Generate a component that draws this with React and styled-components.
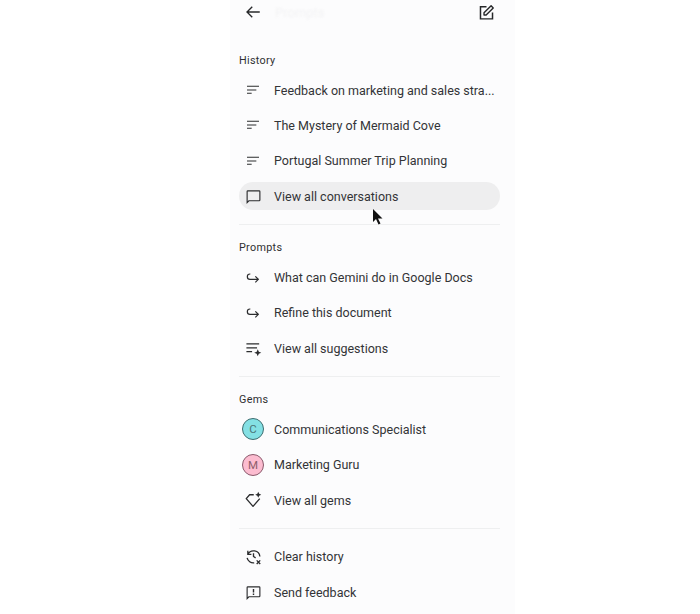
import React from "react";
import styled, { createGlobalStyle } from "styled-components";

const Global = createGlobalStyle`
  html, body { margin: 0; padding: 0; background: #fff; }
  body { font-family: Roboto, "Liberation Sans", sans-serif; color: #2a2b2d; }
`;

const Page = styled.div`
  width: 700px;
  height: 614px;
  overflow: hidden;
  display: flex;
  justify-content: flex-start;
  padding-left: 230px;
  box-sizing: border-box;
`;

const Panel = styled.div`
  position: relative;
  width: 285px;
  height: 614px;
  background: #fcfcfd;
  box-sizing: border-box;
  padding: 0 15px 0 9px;
  display: flex;
  flex-direction: column;
`;

const TopBar = styled.div`
  height: 24px;
  display: flex;
  align-items: center;
  justify-content: space-between;
  padding: 0 5px 0 5px;
  margin-bottom: 27px;
  color: #27282a;
`;

const GhostTitle = styled.span`
  flex: 1;
  margin-left: 13px;
  font-size: 13px;
  color: #f3f3f4;
  filter: blur(1px);
`;

const Heading = styled.div`
  height: 19px;
  line-height: 19px;
  font-size: 10.8px;
  font-weight: 400;
  letter-spacing: 0.3px;
  color: #2f3032;
  margin-bottom: ${(p) => p.$gap}px;
`;

const Row = styled.div`
  height: ${(p) => (p.$active ? 28 : 35.3)}px;
  margin: ${(p) => (p.$active ? "4px 0 3.5px" : "0")};
  display: flex;
  align-items: center;
  border-radius: 14px;
  background: ${(p) => (p.$active ? "#eeeeef" : "transparent")};
  font-size: 12.5px;
  color: #333437;
`;

const IconSlot = styled.span`
  width: 35px;
  flex: none;
  display: flex;
  justify-content: center;
  padding-right: 7px;
  box-sizing: border-box;
  color: #2b2c2e;
`;

const Label = styled.span`
  white-space: nowrap;
`;

const Divider = styled.div`
  height: 1px;
  background: #eeeff0;
  margin: ${(p) => p.$m};
`;

const Avatar = styled.span`
  width: 22px;
  height: 22px;
  flex: none;
  border-radius: 50%;
  box-sizing: border-box;
  border: 1px solid ${(p) => p.$edge};
  background: ${(p) => p.$bg};
  color: ${(p) => p.$fg};
  font-size: 11.5px;
  display: flex;
  align-items: center;
  justify-content: center;
`;

const Cursor = styled.svg`
  position: absolute;
  left: 142px;
  top: 209px;
`;

const Ico = ({ children, size = 16, vb = 24 }) => (
  <svg width={size} height={size} viewBox={`0 0 ${vb} ${vb}`} fill="none" stroke="currentColor" strokeWidth="2">
    {children}
  </svg>
);

const Lines = () => (
  <Ico>
    <path d="M3 6.5h18M3 12h14M3 17h7" strokeWidth="1.6" />
  </Ico>
);
const Chat = () => (
  <Ico size={17}>
    <path d="M3 20.5V5a1 1 0 0 1 1-1h16a1 1 0 0 1 1 1v12a1 1 0 0 1-1 1H5.5z" strokeWidth="1.6" />
  </Ico>
);
const Redo = () => (
  <Ico>
    <path d="M20 16H7.5a4 4 0 0 1 0-8H8M15.5 11.5 20 16l-4.5 4.5" transform="translate(0 -2)" strokeWidth="1.8" />
  </Ico>
);
const Sugg = () => (
  <Ico size={17}>
    <path d="M2 5.5h18M2 11h15M2 16.5h8" strokeWidth="1.7" />
    <path d="M18 13l1.5 3.5L23 18l-3.5 1.5L18 23l-1.5-3.5L13 18l3.5-1.5z" fill="currentColor" stroke="none" />
  </Ico>
);
const Gem = () => (
  <Ico size={18}>
    <path d="M13 5H7.5L3 10.2 12 20.5l9-10.3" strokeWidth="1.8" strokeLinejoin="round" />
    <path d="M19 1l1.2 2.8L23 5l-2.8 1.2L19 9l-1.2-2.8L15 5l2.8-1.2z" fill="currentColor" stroke="none" />
  </Ico>
);
const ClearHist = () => (
  <Ico size={17}>
    <path d="M4 9a9 9 0 0 1 17 3M4 4v5h5M3 14a9 9 0 0 0 10 7M12 7.5V12l3 2" strokeWidth="1.9" />
    <path d="M16.5 17.5l5 5M21.5 17.5l-5 5" strokeWidth="1.9" />
  </Ico>
);
const Feedback = () => (
  <Ico size={17}>
    <path d="M3 20.5V5a1 1 0 0 1 1-1h16a1 1 0 0 1 1 1v12a1 1 0 0 1-1 1H5.5z" strokeWidth="1.6" />
    <path d="M12 7v5M12 13.5v2" strokeWidth="2" />
  </Ico>
);

const Item = ({ icon, children, active }) => (
  <Row $active={active}>
    <IconSlot>{icon}</IconSlot>
    <Label>{children}</Label>
  </Row>
);

export default function App() {
  return (
    <>
      <Global />
      <Page>
        <Panel>
          <TopBar>
            <Ico size={18}>
              <path d="M21 12H4M11 5l-7 7 7 7" strokeWidth="1.8" />
            </Ico>
            <GhostTitle>Prompts</GhostTitle>
            <Ico size={17}>
              <path d="M12 4H3.5v17h17v-9" strokeWidth="2.1" />
              <path d="M8.5 15.5v-3L18.5 2.5l3 3-10 10z" strokeWidth="2" strokeLinejoin="round" />
            </Ico>
          </TopBar>
          <Heading $gap={2.5}>History</Heading>
          <Item icon={<Lines />}>Feedback on marketing and sales stra...</Item>
          <Item icon={<Lines />}>The Mystery of Mermaid Cove</Item>
          <Item icon={<Lines />}>Portugal Summer Trip Planning</Item>
          <Item active icon={<Chat />}>View all conversations</Item>
          <Divider $m="10px 0 13.5px" />
          <Heading $gap={2.5}>Prompts</Heading>
          <Item icon={<Redo />}>What can Gemini do in Google Docs</Item>
          <Item icon={<Redo />}>Refine this document</Item>
          <Item icon={<Sugg />}>View all suggestions</Item>
          <Divider $m="10px 0 13px" />
          <Heading $gap={3}>Gems</Heading>
          <Item icon={<Avatar $bg="#84e0e4" $edge="#3d6d70" $fg="#4a7679">C</Avatar>}>Communications Specialist</Item>
          <Item icon={<Avatar $bg="#fcbcd0" $edge="#8a5a6c" $fg="#8c5e6c">M</Avatar>}>Marketing Guru</Item>
          <Item icon={<Gem />}>View all gems</Item>
          <Divider $m="10px 0 10.5px" />
          <Item icon={<ClearHist />}>Clear history</Item>
          <Item icon={<Feedback />}>Send feedback</Item>
          <Cursor width="12" height="16" viewBox="0 0 12 16">
            <path d="M1 0v13l3-3 2.5 5.5 2-1L6 9.5h4.5z" fill="#111" />
          </Cursor>
        </Panel>
      </Page>
    </>
  );
}
